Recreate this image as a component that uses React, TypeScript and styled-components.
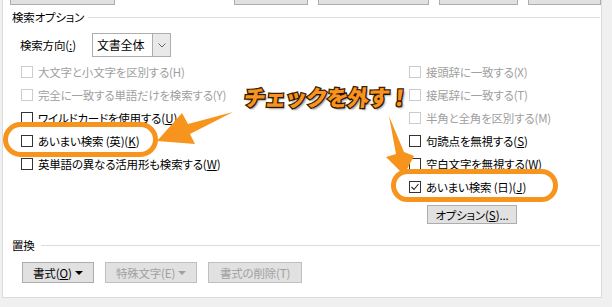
import styled, { createGlobalStyle } from "styled-components";

const GlobalStyle = createGlobalStyle`
  html, body { margin: 0; padding: 0; background: #f0f0f0; }
  body {
    font-family: "Noto Sans CJK JP", "Noto Sans", sans-serif;
    font-size: 11.5px;
    letter-spacing: -0.2px;
    font-feature-settings: "palt";
    color: #000;
  }
`;

const Page = styled.div`
  position: relative;
  width: 612px;
  height: 307px;
  overflow: hidden;
  padding-left: 2px;
  box-sizing: border-box;
`;

const Panel = styled.div`
  width: 600px;
  height: 298px;
  box-sizing: border-box;
  background: #fff;
  border: 1px solid #dcdcdc;
  border-top: none;
  display: flex;
  flex-direction: column;
`;

const TopBar = styled.div`
  display: flex;
  gap: 10px;
  height: 5px;
  padding: 0 0 0 7px;
`;

const StubButton = styled.div<{ $w: number; $push?: boolean }>`
  width: ${({ $w }) => $w}px;
  height: 5px;
  box-sizing: border-box;
  background: #e1e1e1;
  border: 1px solid #adadad;
  border-top: none;
  margin-right: ${({ $push }) => ($push ? "auto" : "0")};
`;

const GroupHeader = styled.div<{ $top: number; $line: number }>`
  display: flex;
  align-items: center;
  height: 14px;
  line-height: 14px;
  margin-top: ${({ $top }) => $top}px;
  padding: 0 1px 0 9px;
  span { white-space: nowrap; }
  &::after {
    content: "";
    flex: 1;
    height: 1px;
    background: #dcdcdc;
    margin-left: ${({ $line }) => $line}px;
  }
`;

const DirRow = styled.div`
  display: flex;
  align-items: center;
  margin-top: 9px;
  padding-left: 17px;
  height: 24px;
`;

const DirLabel = styled.span`
  width: 72px;
`;

const Select = styled.div`
  display: flex;
  width: 79px;
  height: 24px;
  box-sizing: border-box;
  border: 1px solid #adadad;
  background: #fff;
`;

const SelectText = styled.span`
  flex: 1;
  padding-left: 4px;
  line-height: 22px;
  font-size: 12px;
`;

const SelectArrow = styled.span`
  width: 17px;
  border-left: 1px solid #adadad;
  background: #e9e9e9;
  display: flex;
  align-items: center;
  justify-content: center;
`;

const Options = styled.div`
  display: grid;
  grid-template-columns: 388px 1fr;
  margin-top: 3px;
  padding-left: 18px;
`;

const Column = styled.div`
  display: flex;
  flex-direction: column;
`;

const CheckRow = styled.label<{ $off?: boolean }>`
  display: flex;
  align-items: center;
  gap: 5px;
  height: 23px;
  white-space: nowrap;
  color: ${({ $off }) => ($off ? "#a0a0a0" : "#000")};
`;

const Box = styled.span<{ $off?: boolean }>`
  width: 12px;
  height: 12px;
  box-sizing: border-box;
  border: 1px solid ${({ $off }) => ($off ? "#cccccc" : "#333")};
  background: #fff;
  display: flex;
  align-items: center;
  justify-content: center;
`;

const Key = styled.span`
  font-feature-settings: normal;
  letter-spacing: 0;
`;

const Button = styled.div<{ $w: number; $off?: boolean }>`
  width: ${({ $w }) => $w}px;
  height: 21px;
  box-sizing: border-box;
  background: #e1e1e1;
  border: 1px solid ${({ $off }) => ($off ? "#bfbfbf" : "#adadad")};
  color: ${({ $off }) => ($off ? "#a0a0a0" : "#000")};
  display: flex;
  align-items: center;
  justify-content: center;
  gap: 3px;
  white-space: nowrap;
`;

const OptionButton = styled(Button)`
  height: 19px;
  margin: 7px 0 0 18px;
`;

const BottomBar = styled.div`
  display: flex;
  gap: 11px;
  margin-top: 10px;
  padding-left: 19px;
`;

const Caret = styled.span<{ $off?: boolean }>`
  width: 0;
  height: 0;
  border-left: 4px solid transparent;
  border-right: 4px solid transparent;
  border-top: 4px solid ${({ $off }) => ($off ? "#a0a0a0" : "#000")};
`;

const Pill = styled.div<{ $x: number; $y: number; $w: number; $h: number }>`
  position: absolute;
  left: ${({ $x }) => $x}px;
  top: ${({ $y }) => $y}px;
  width: ${({ $w }) => $w}px;
  height: ${({ $h }) => $h}px;
  box-sizing: border-box;
  border: 5px solid #f7941d;
  border-radius: 18px;
  pointer-events: none;
`;

const Callout = styled.div`
  position: absolute;
  left: 244px;
  top: 81px;
  font-size: 22px;
  font-weight: 900;
  font-feature-settings: normal;
  letter-spacing: -1.3px;
  line-height: 30px;
  color: #f7931e;
  -webkit-text-stroke: 2.5px #3a2000;
  paint-order: stroke fill;
  text-shadow: 2px 2px 2px rgba(0, 0, 0, 0.45);
  transform: skewX(-6deg);
  white-space: nowrap;
`;

const Arrows = styled.svg`
  position: absolute;
  left: 0;
  top: 0;
  pointer-events: none;
`;

type Opt = { text: string; key?: string; off?: boolean; checked?: boolean };

const leftOpts: Opt[] = [
  { text: "大文字と小文字を区別する(H)", off: true },
  { text: "完全に一致する単語だけを検索する(Y)", off: true },
  { text: "ワイルドカードを使用する", key: "U" },
  { text: "あいまい検索 (英)", key: "K" },
  { text: "英単語の異なる活用形も検索する", key: "W" },
];

const rightOpts: Opt[] = [
  { text: "接頭辞に一致する(X)", off: true },
  { text: "接尾辞に一致する(T)", off: true },
  { text: "半角と全角を区別する(M)", off: true },
  { text: "句読点を無視する", key: "S" },
  { text: "空白文字を無視する(W)" },
  { text: "あいまい検索 (日)", key: "J", checked: true },
];

function Accel({ k }: { k: string }) {
  return (
    <Key>
      (<u>{k}</u>)
    </Key>
  );
}

function Check({ opt }: { opt: Opt }) {
  return (
    <CheckRow $off={opt.off}>
      <Box $off={opt.off}>
        {opt.checked && (
          <svg width="10" height="10" viewBox="0 0 10 10">
            <polyline points="1.5,5 4,7.5 8.5,2" fill="none" stroke="#222" strokeWidth="1.1" />
          </svg>
        )}
      </Box>
      <span>
        {opt.text}
        {opt.key && <Accel k={opt.key} />}
      </span>
    </CheckRow>
  );
}

export default function App() {
  return (
    <Page>
      <GlobalStyle />
      <Panel>
        <TopBar>
          <StubButton $w={105} $push />
          <StubButton $w={74} />
          <StubButton $w={111} />
          <StubButton $w={79} />
          <StubButton $w={73} />
        </TopBar>
        <GroupHeader $top={5} $line={4}>
          <span>検索オプション</span>
        </GroupHeader>
        <DirRow>
          <DirLabel>
            検索方向<Accel k=":" />
          </DirLabel>
          <Select>
            <SelectText>文書全体</SelectText>
            <SelectArrow>
              <svg width="8" height="5" viewBox="0 0 8 5">
                <polyline points="0.5,0.5 4,4 7.5,0.5" fill="none" stroke="#666" strokeWidth="1" />
              </svg>
            </SelectArrow>
          </Select>
        </DirRow>
        <Options>
          <Column>
            {leftOpts.map((o, i) => (
              <Check key={i} opt={o} />
            ))}
          </Column>
          <Column>
            {rightOpts.map((o, i) => (
              <Check key={i} opt={o} />
            ))}
            <OptionButton $w={90}>
              <span>
                オプション<Accel k="S" />...
              </span>
            </OptionButton>
          </Column>
        </Options>
        <GroupHeader $top={14} $line={6}>
          <span>置換</span>
        </GroupHeader>
        <BottomBar>
          <Button $w={72}>
            <span>
              書式<Accel k="O" />
            </span>
            <Caret />
          </Button>
          <Button $w={92} $off>
            特殊文字(E)<Caret $off />
          </Button>
          <Button $w={94} $off>
            書式の削除(T)
          </Button>
        </BottomBar>
      </Panel>

      <Pill $x={3} $y={122} $w={155} $h={35} />
      <Pill $x={391} $y={169} $w={167} $h={33} />
      <Callout>チェックを外す！</Callout>
      <Arrows width="612" height="307" viewBox="0 0 612 307">
        <polygon points="233,112 188,124 182,113 157,141 195,144 190,134" fill="#f7941d" />
        <polygon points="389,116 404,152 414,156 404,175 386,157 396,154" fill="#f7941d" />
      </Arrows>
    </Page>
  );
}
